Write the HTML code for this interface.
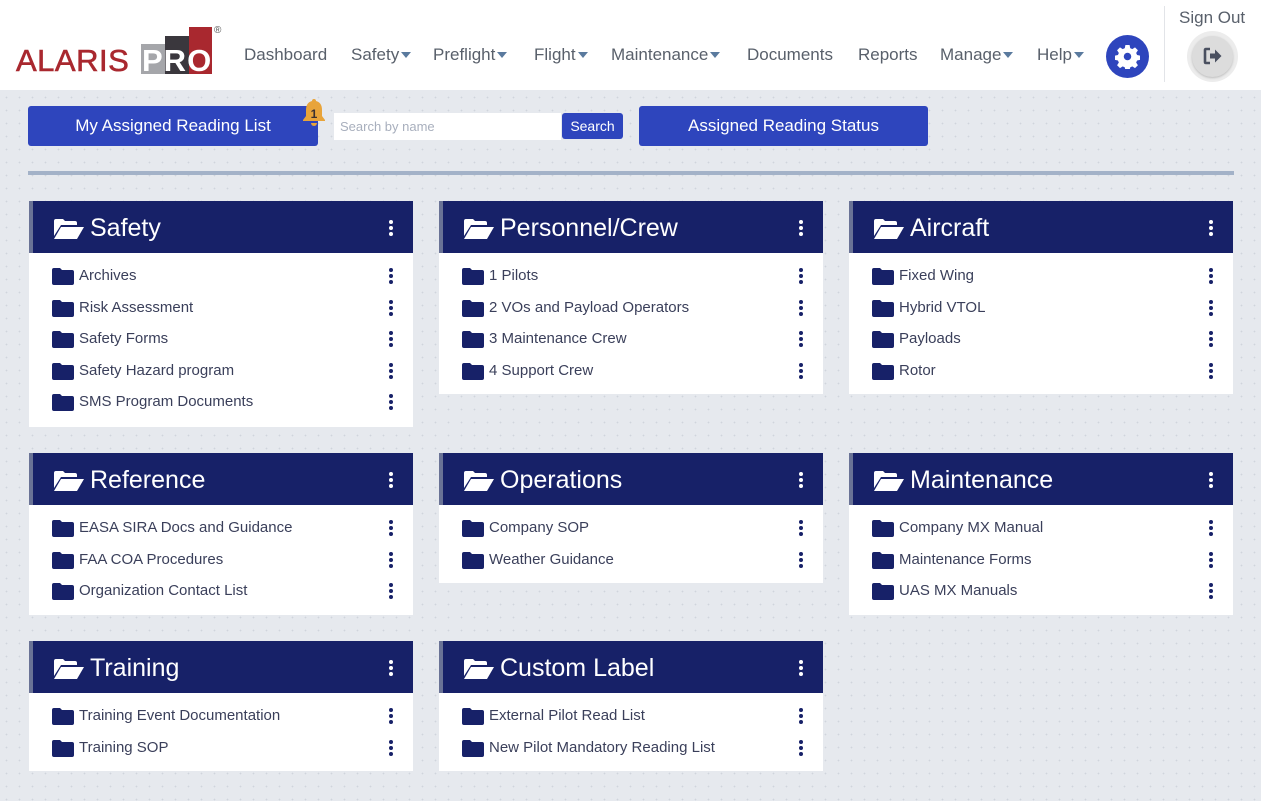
<!DOCTYPE html>
<html><head><meta charset="utf-8"><style>
*{box-sizing:border-box;margin:0;padding:0}
body{width:1261px;height:801px;overflow:hidden;font-family:"Liberation Sans",sans-serif;background:#e6e9ee;background-image:radial-gradient(#d0d4dc 0.7px,transparent 1px);background-size:13px 13px;position:relative}
.hdr{position:absolute;left:0;top:0;width:1261px;height:90px;background:#fff}
.nav{position:absolute;top:45px;font-size:17px;color:#59606b}
.car{display:inline-block;width:0;height:0;border-left:5px solid transparent;border-right:5px solid transparent;border-top:6px solid #5a7a9e;margin-left:2px;vertical-align:2px}
.btn{position:absolute;background:#2e45bd;color:#fff;border-radius:3px;text-align:center;font-size:17px}
.card{position:absolute;width:384px;background:#fff}
.ch{height:52px;background:#172168;border-left:4px solid #6a7396;color:#fff;font-size:25px;position:relative}
.ch svg.f{position:absolute;left:21px;top:17px}
.ch span{position:absolute;left:57px;top:13px}
.kb{position:absolute;width:4px}
.kb i{display:block;width:4px;height:4px;border-radius:50%;margin-bottom:2px}
.ch .kb{right:20px;top:19px}.ch .kb i{background:#fff}
.it{height:31.5px;position:relative;font-size:15px;color:#3a3f5a}
.it svg{position:absolute;left:23px;top:7px}
.it span{position:absolute;left:50px;top:6px}
.it .kb{right:20px;top:7px}.it .kb i{background:#172168}
</style></head><body>
<div class="hdr">
 <div style="position:absolute;left:16px;top:43px;font-size:31px;color:#a9282f;letter-spacing:0.5px;-webkit-text-stroke:0.6px #a9282f">ALARIS</div>
 <div style="position:absolute;left:141px;top:44px;width:24px;height:30px;background:#a5a6aa"></div>
 <div style="position:absolute;left:165px;top:36px;width:24px;height:38px;background:#3a373d"></div>
 <div style="position:absolute;left:189px;top:27px;width:23px;height:47px;background:#a9282f"></div>
 <div style="position:absolute;left:142px;top:43px;font-size:31px;font-weight:bold;color:#fff;letter-spacing:1px">PRO</div>
 <div style="position:absolute;left:214px;top:25px;font-size:10px;color:#555">®</div>
 <div class="nav" style="left:244px">Dashboard</div>
 <div class="nav" style="left:351px">Safety<span class="car"></span></div>
 <div class="nav" style="left:433px">Preflight<span class="car"></span></div>
 <div class="nav" style="left:534px">Flight<span class="car"></span></div>
 <div class="nav" style="left:611px">Maintenance<span class="car"></span></div>
 <div class="nav" style="left:747px">Documents</div>
 <div class="nav" style="left:858px">Reports</div>
 <div class="nav" style="left:940px">Manage<span class="car"></span></div>
 <div class="nav" style="left:1037px">Help<span class="car"></span></div>
 <div style="position:absolute;left:1106px;top:35px;width:43px;height:43px;border-radius:50%;background:#2e45bd"></div>
 <svg style="position:absolute;left:1115px;top:44px" width="25" height="25" viewBox="0 0 24 24"><path fill="#fff" d="M10 1h4l.6 3 2 .9 2.6-1.7 2.8 2.8-1.7 2.6.9 2 3 .6v4l-3 .6-.9 2 1.7 2.6-2.8 2.8-2.6-1.7-2 .9-.6 3h-4l-.6-3-2-.9-2.6 1.7-2.8-2.8 1.7-2.6-.9-2-3-.6v-4l3-.6.9-2-1.7-2.6 2.8-2.8 2.6 1.7 2-.9z"/><circle cx="12" cy="12" r="3.6" fill="#2e45bd"/></svg>
 <div style="position:absolute;left:1164px;top:6px;width:1px;height:76px;background:#e2e4e8"></div>
 <div style="position:absolute;left:1179px;top:8px;font-size:17px;color:#59606b">Sign Out</div>
 <div style="position:absolute;left:1187px;top:31px;width:51px;height:51px;border-radius:50%;background:#ececec"></div>
 <div style="position:absolute;left:1192px;top:36px;width:41px;height:41px;border-radius:50%;background:#dcdcdc;box-shadow:0 1px 2px #bbb"></div>
 <svg style="position:absolute;left:1203px;top:47px" width="20" height="18" viewBox="0 0 20 18"><path d="M7 2H3Q2 2 2 3V15Q2 16 3 16H7" stroke="#4a5060" stroke-width="2.6" fill="none"/><path fill="#4a5060" d="M7 6.5h5V2.5l6.5 6.5L12 15.5v-4H7z"/></svg>
</div>
<div class="btn" style="left:28px;top:106px;width:290px;height:40px;line-height:40px">My Assigned Reading List</div>
<svg style="position:absolute;left:299px;top:97px" width="30" height="32" viewBox="0 0 30 32"><path fill="#e8a43a" d="M15 2c1.5 0 2 1 2 2 4 1 6 4 6 9v6l3 4v1H4v-1l3-4v-6c0-5 2-8 6-9 0-1 .5-2 2-2z"/><path fill="#e8a43a" d="M12 26h6a3 3 0 0 1-6 0z"/><text x="15" y="21" font-size="12" font-weight="bold" text-anchor="middle" fill="#3a3030" font-family="Liberation Sans">1</text></svg>
<div style="position:absolute;left:334px;top:113px;width:227px;height:27px;background:#fff;font-size:13px;color:#a8afbd;padding:6px 6px">Search by name</div>
<div class="btn" style="left:562px;top:113px;width:61px;height:26px;line-height:26px;font-size:14px;background:#2e45bd">Search</div>
<div class="btn" style="left:639px;top:106px;width:289px;height:40px;line-height:40px">Assigned Reading Status</div>
<div style="position:absolute;left:28px;top:171px;width:1206px;height:4px;background:#a3b2c8"></div>

<svg width="0" height="0" style="position:absolute"><defs>
<symbol id="fc" viewBox="0 0 22 17"><path fill="#172168" d="M0 2Q0 0 2 0H8L10 2H20Q22 2 22 4V15Q22 17 20 17H2Q0 17 0 15z"/></symbol>
<symbol id="fo" viewBox="0 0 30 22"><path fill="#fff" d="M0 3Q0 1 2 1H9L11 3H21Q23 3 23 5V7H7L0 18z"/><path fill="#fff" d="M7 9H30L23 21H0z"/></symbol>
</defs></svg>

<div class="card" style="left:29px;top:201px;height:226px">
 <div class="ch"><svg class="f" width="30" height="22"><use href="#fo"/></svg><span>Safety</span><div class="kb"><i></i><i></i><i></i></div></div>
 <div style="height:8px"></div>
 <div class="it"><svg width="22" height="17"><use href="#fc"/></svg><span>Archives</span><div class="kb"><i></i><i></i><i></i></div></div>
 <div class="it"><svg width="22" height="17"><use href="#fc"/></svg><span>Risk Assessment</span><div class="kb"><i></i><i></i><i></i></div></div>
 <div class="it"><svg width="22" height="17"><use href="#fc"/></svg><span>Safety Forms</span><div class="kb"><i></i><i></i><i></i></div></div>
 <div class="it"><svg width="22" height="17"><use href="#fc"/></svg><span>Safety Hazard program</span><div class="kb"><i></i><i></i><i></i></div></div>
 <div class="it"><svg width="22" height="17"><use href="#fc"/></svg><span>SMS Program Documents</span><div class="kb"><i></i><i></i><i></i></div></div>
</div>
<div class="card" style="left:439px;top:201px;height:193px">
 <div class="ch"><svg class="f" width="30" height="22"><use href="#fo"/></svg><span>Personnel/Crew</span><div class="kb"><i></i><i></i><i></i></div></div>
 <div style="height:8px"></div>
 <div class="it"><svg width="22" height="17"><use href="#fc"/></svg><span>1 Pilots</span><div class="kb"><i></i><i></i><i></i></div></div>
 <div class="it"><svg width="22" height="17"><use href="#fc"/></svg><span>2 VOs and Payload Operators</span><div class="kb"><i></i><i></i><i></i></div></div>
 <div class="it"><svg width="22" height="17"><use href="#fc"/></svg><span>3 Maintenance Crew</span><div class="kb"><i></i><i></i><i></i></div></div>
 <div class="it"><svg width="22" height="17"><use href="#fc"/></svg><span>4 Support Crew</span><div class="kb"><i></i><i></i><i></i></div></div>
</div>
<div class="card" style="left:849px;top:201px;height:193px">
 <div class="ch"><svg class="f" width="30" height="22"><use href="#fo"/></svg><span>Aircraft</span><div class="kb"><i></i><i></i><i></i></div></div>
 <div style="height:8px"></div>
 <div class="it"><svg width="22" height="17"><use href="#fc"/></svg><span>Fixed Wing</span><div class="kb"><i></i><i></i><i></i></div></div>
 <div class="it"><svg width="22" height="17"><use href="#fc"/></svg><span>Hybrid VTOL</span><div class="kb"><i></i><i></i><i></i></div></div>
 <div class="it"><svg width="22" height="17"><use href="#fc"/></svg><span>Payloads</span><div class="kb"><i></i><i></i><i></i></div></div>
 <div class="it"><svg width="22" height="17"><use href="#fc"/></svg><span>Rotor</span><div class="kb"><i></i><i></i><i></i></div></div>
</div>
<div class="card" style="left:29px;top:453px;height:162px">
 <div class="ch"><svg class="f" width="30" height="22"><use href="#fo"/></svg><span>Reference</span><div class="kb"><i></i><i></i><i></i></div></div>
 <div style="height:8px"></div>
 <div class="it"><svg width="22" height="17"><use href="#fc"/></svg><span>EASA SIRA Docs and Guidance</span><div class="kb"><i></i><i></i><i></i></div></div>
 <div class="it"><svg width="22" height="17"><use href="#fc"/></svg><span>FAA COA Procedures</span><div class="kb"><i></i><i></i><i></i></div></div>
 <div class="it"><svg width="22" height="17"><use href="#fc"/></svg><span>Organization Contact List</span><div class="kb"><i></i><i></i><i></i></div></div>
</div>
<div class="card" style="left:439px;top:453px;height:130px">
 <div class="ch"><svg class="f" width="30" height="22"><use href="#fo"/></svg><span>Operations</span><div class="kb"><i></i><i></i><i></i></div></div>
 <div style="height:8px"></div>
 <div class="it"><svg width="22" height="17"><use href="#fc"/></svg><span>Company SOP</span><div class="kb"><i></i><i></i><i></i></div></div>
 <div class="it"><svg width="22" height="17"><use href="#fc"/></svg><span>Weather Guidance</span><div class="kb"><i></i><i></i><i></i></div></div>
</div>
<div class="card" style="left:849px;top:453px;height:162px">
 <div class="ch"><svg class="f" width="30" height="22"><use href="#fo"/></svg><span>Maintenance</span><div class="kb"><i></i><i></i><i></i></div></div>
 <div style="height:8px"></div>
 <div class="it"><svg width="22" height="17"><use href="#fc"/></svg><span>Company MX Manual</span><div class="kb"><i></i><i></i><i></i></div></div>
 <div class="it"><svg width="22" height="17"><use href="#fc"/></svg><span>Maintenance Forms</span><div class="kb"><i></i><i></i><i></i></div></div>
 <div class="it"><svg width="22" height="17"><use href="#fc"/></svg><span>UAS MX Manuals</span><div class="kb"><i></i><i></i><i></i></div></div>
</div>
<div class="card" style="left:29px;top:641px;height:130px">
 <div class="ch"><svg class="f" width="30" height="22"><use href="#fo"/></svg><span>Training</span><div class="kb"><i></i><i></i><i></i></div></div>
 <div style="height:8px"></div>
 <div class="it"><svg width="22" height="17"><use href="#fc"/></svg><span>Training Event Documentation</span><div class="kb"><i></i><i></i><i></i></div></div>
 <div class="it"><svg width="22" height="17"><use href="#fc"/></svg><span>Training SOP</span><div class="kb"><i></i><i></i><i></i></div></div>
</div>
<div class="card" style="left:439px;top:641px;height:130px">
 <div class="ch"><svg class="f" width="30" height="22"><use href="#fo"/></svg><span>Custom Label</span><div class="kb"><i></i><i></i><i></i></div></div>
 <div style="height:8px"></div>
 <div class="it"><svg width="22" height="17"><use href="#fc"/></svg><span>External Pilot Read List</span><div class="kb"><i></i><i></i><i></i></div></div>
 <div class="it"><svg width="22" height="17"><use href="#fc"/></svg><span>New Pilot Mandatory Reading List</span><div class="kb"><i></i><i></i><i></i></div></div>
</div>
</body></html>
